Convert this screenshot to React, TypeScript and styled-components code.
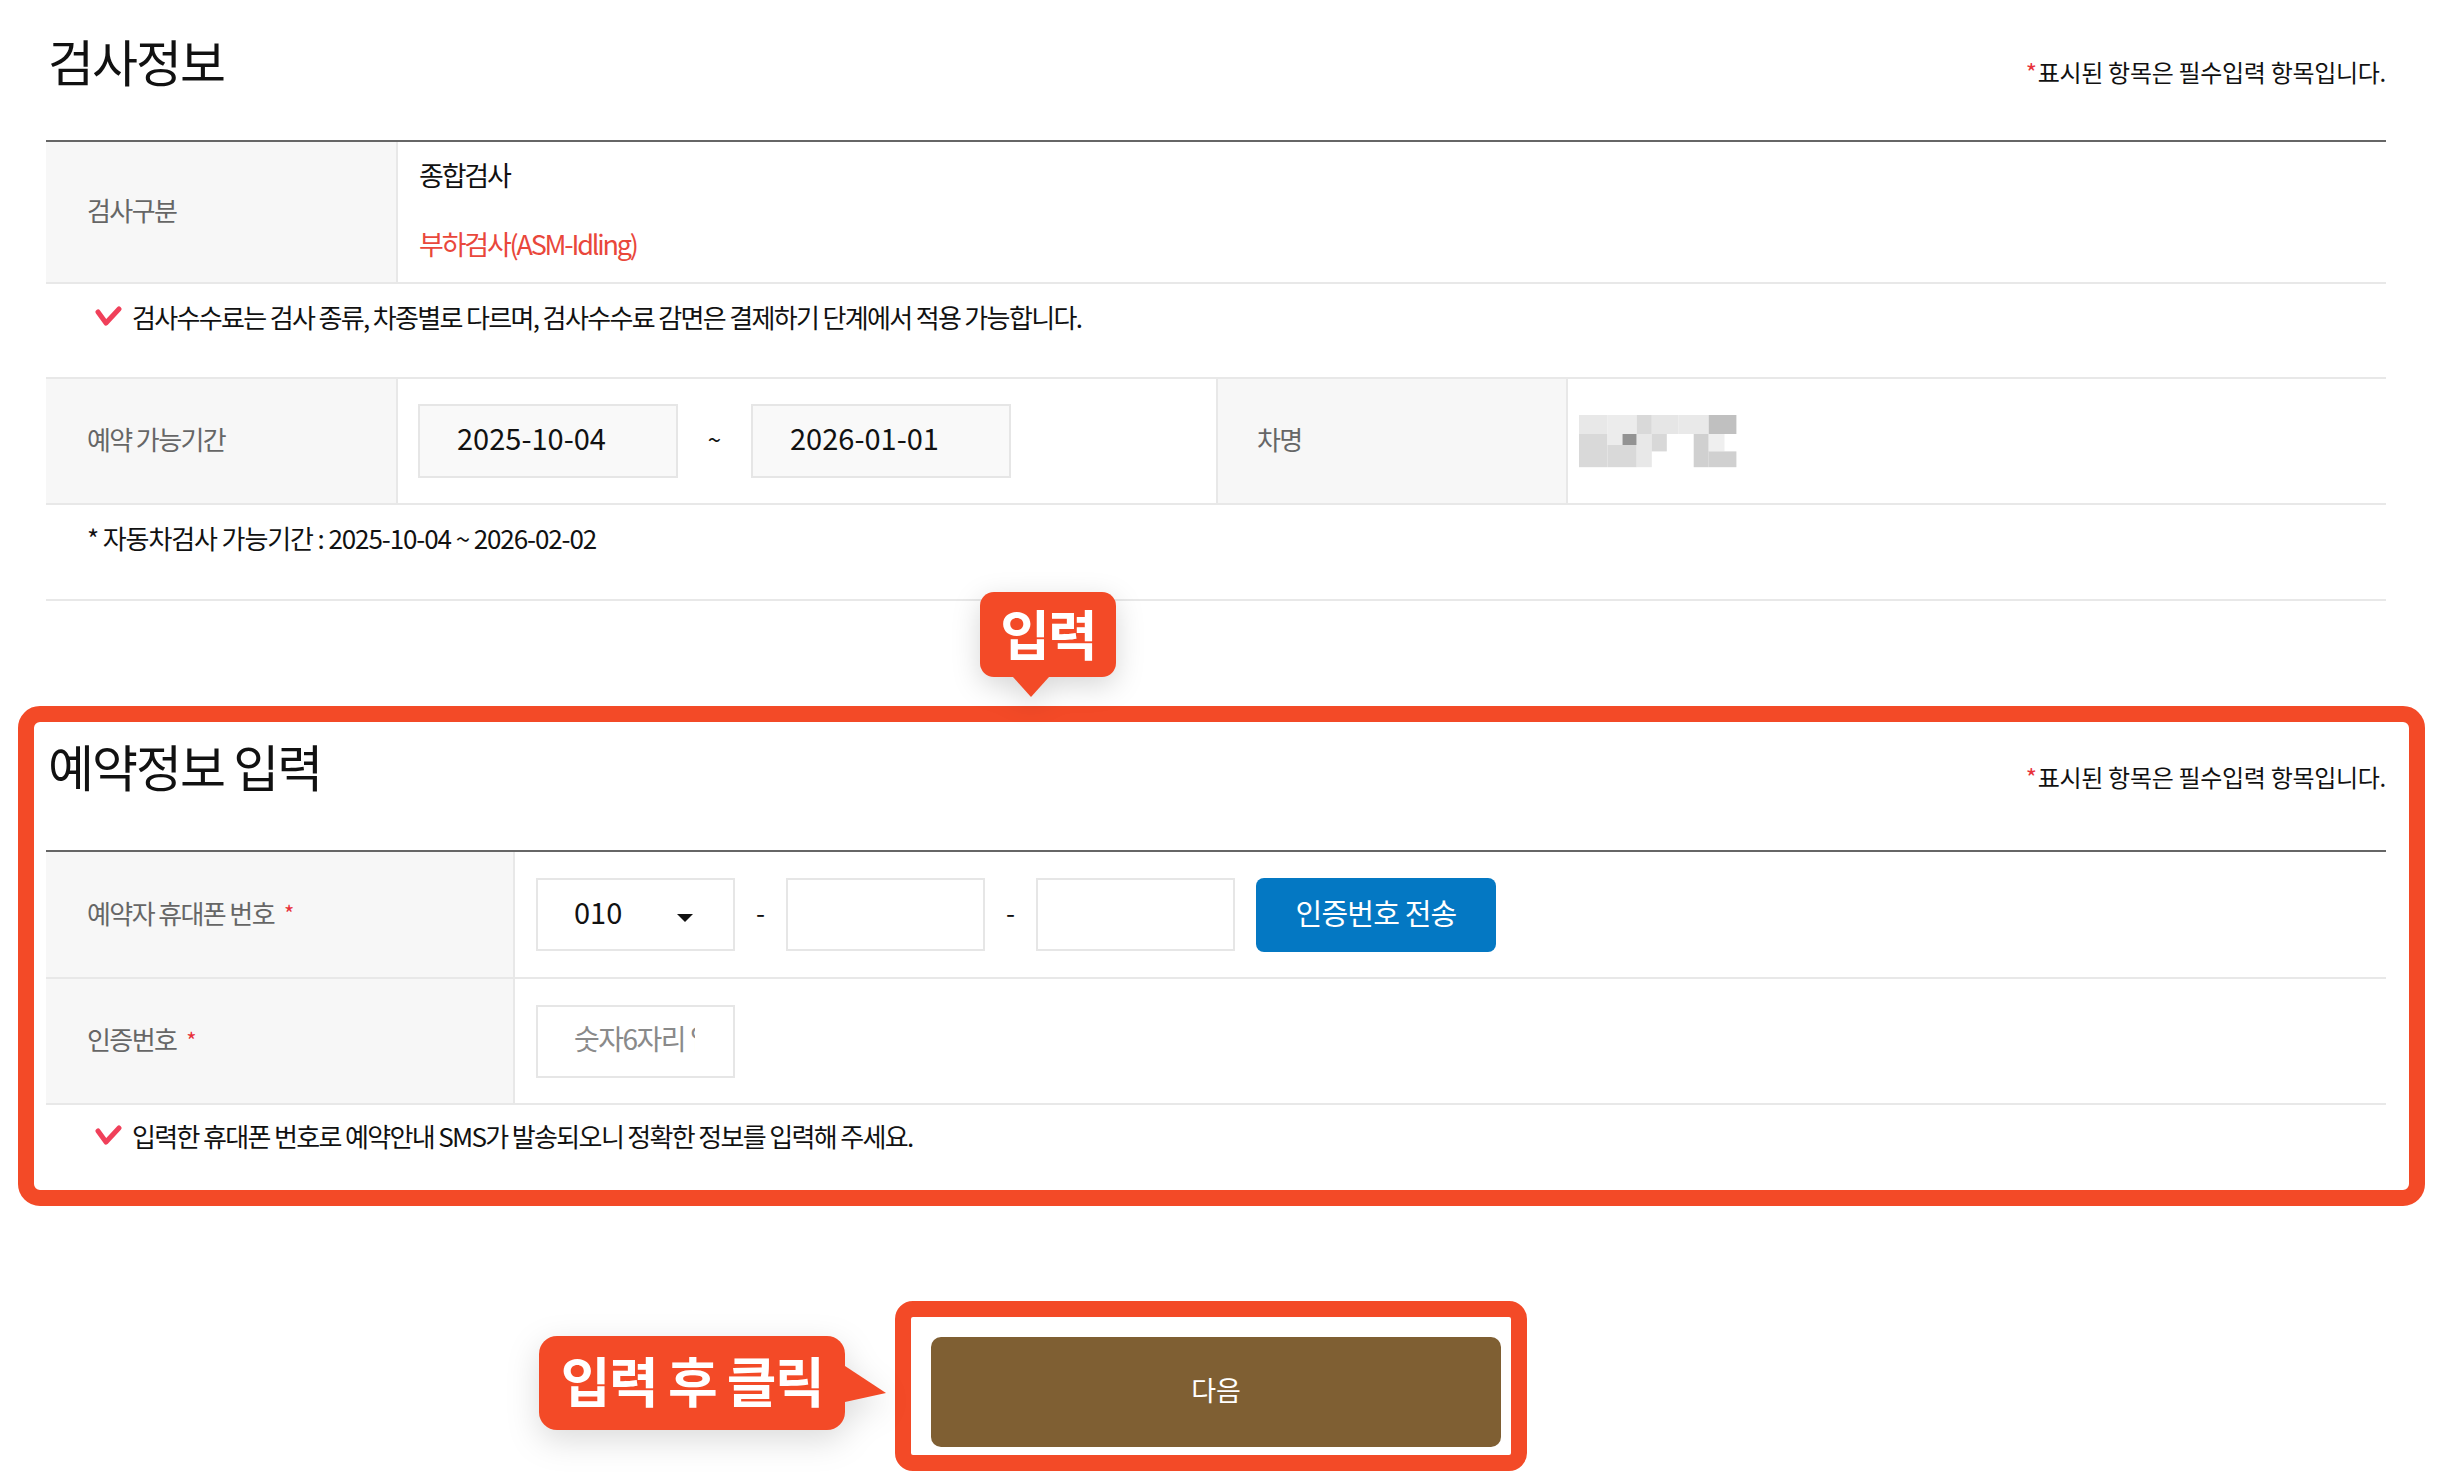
import styled, { createGlobalStyle } from "styled-components";

const ORANGE = "#f34a27";
const LINE = "#e8e8e8";

const GlobalStyle = createGlobalStyle`
  html, body { margin: 0; padding: 0; background: #fff; }
  body {
    font-family: "Noto Sans CJK KR", "Noto Sans", sans-serif;
    color: #111;
  }
  *, *::before, *::after { box-sizing: border-box; }
`;

const Page = styled.div`
  width: 2444px;
  height: 1484px;
  padding: 0 58px 0 46px;
  overflow: hidden;
`;

const SectionHead = styled.div<{ $height: number; $top: number }>`
  display: flex;
  justify-content: space-between;
  align-items: baseline;
  height: ${(p) => p.$height}px;
  padding-top: ${(p) => p.$top}px;
`;

const Title = styled.h2`
  margin: 0 0 0 2px;
  font-size: 50px;
  font-weight: 400;
  line-height: 60px;
  letter-spacing: -2px;
  color: #111;
`;

const Required = styled.p`
  margin: 0;
  font-size: 24px;
  line-height: 30px;
  letter-spacing: -0.3px;
  color: #111;
`;

const Star = styled.span`
  color: #e8313a;
  margin-right: 1px;
`;

const Table = styled.div<{ $cols: string }>`
  display: grid;
  grid-template-columns: ${(p) => p.$cols};
  border-top: 2px solid #666;
`;

const Label = styled.div<{ $h: number; $divider?: boolean }>`
  height: ${(p) => p.$h}px;
  display: flex;
  align-items: center;
  gap: 10px;
  padding: 0 0 5px ${(p) => (p.$divider ? 39 : 41)}px;
  background: #f7f7f7;
  border-bottom: 2px solid ${LINE};
  border-left: ${(p) => (p.$divider ? `2px solid ${LINE}` : "none")};
  font-size: 26px;
  letter-spacing: -1.6px;
  color: #666;
`;

const LabelStar = styled.span`
  color: #e8313a;
  font-size: 22px;
`;

const Cell = styled.div<{ $h: number; $span?: number; $pad?: number }>`
  grid-column: span ${(p) => p.$span ?? 1};
  height: ${(p) => p.$h}px;
  display: flex;
  align-items: center;
  padding-left: ${(p) => p.$pad ?? 21}px;
  border-left: 2px solid ${LINE};
  border-bottom: 2px solid ${LINE};
`;

const TypeCell = styled(Cell)`
  flex-direction: column;
  align-items: flex-start;
  justify-content: flex-start;
  gap: 37px;
  padding-top: 17px;
`;

const TypeText = styled.span<{ $accent?: boolean }>`
  font-size: 27px;
  line-height: 32px;
  letter-spacing: -2.2px;
  color: ${(p) => (p.$accent ? "#e9473b" : "#111")};
`;

const NoteRow = styled.div<{
  $h: number;
  $top: number;
  $pad: number;
  $border?: boolean;
  $spacing?: number;
}>`
  grid-column: 1 / -1;
  height: ${(p) => p.$h}px;
  display: flex;
  align-items: flex-start;
  gap: 10px;
  padding: ${(p) => p.$top}px 0 0 ${(p) => p.$pad}px;
  border-bottom: ${(p) => (p.$border ? `2px solid ${LINE}` : "none")};
  font-size: 26px;
  line-height: 32px;
  letter-spacing: ${(p) => p.$spacing ?? -1.65}px;
  color: #111;
`;

const CheckIcon = styled.svg`
  flex: none;
  width: 28px;
  height: 32px;
`;

const DateBox = styled.div`
  width: 260px;
  height: 74px;
  display: flex;
  align-items: center;
  padding: 0 0 9px 37px;
  background: #f9f9f9;
  border: 2px solid #e6e6e6;
  font-size: 29px;
  color: #111;
`;

const Tilde = styled.span`
  width: 73px;
  padding-bottom: 6px;
  text-align: center;
  font-size: 24px;
  color: #111;
`;

const Blob = styled.svg`
  width: 158px;
  height: 53px;
`;

const Highlight = styled.section`
  position: relative;
  margin: 105px -39px 0 -28px;
  padding: 0 23px 0 12px;
  border: 16px solid ${ORANGE};
  border-radius: 22px;
`;

const Bubble = styled.div`
  position: absolute;
  left: 946px;
  top: -130px;
  width: 136px;
  height: 85px;
  display: flex;
  align-items: center;
  justify-content: center;
  padding-bottom: 4px;
  background: ${ORANGE};
  border-radius: 14px;
  color: #fff;
  font-size: 54px;
  font-weight: 700;
  letter-spacing: -2px;
  filter: drop-shadow(0 8px 14px rgba(0, 0, 0, 0.16));

  &::after {
    content: "";
    position: absolute;
    left: 33px;
    top: 100%;
    width: 36px;
    height: 20px;
    background: ${ORANGE};
    clip-path: polygon(0 0, 100% 0, 50% 100%);
  }
`;

const FieldRow = styled.div`
  display: flex;
  align-items: center;
  gap: 21px;
`;

const Select = styled.div`
  width: 199px;
  height: 73px;
  display: flex;
  align-items: center;
  justify-content: space-between;
  padding: 0 40px 8px 36px;
  background: #fff;
  border: 2px solid #e6e6e6;
  font-size: 29px;
  color: #111;
`;

const Caret = styled.span`
  width: 0;
  height: 0;
  margin-top: 14px;
  border-left: 8px solid transparent;
  border-right: 8px solid transparent;
  border-top: 8px solid #111;
`;

const Dash = styled.span`
  width: 9px;
  padding-bottom: 6px;
  font-size: 26px;
  color: #111;
`;

const TextInput = styled.input`
  width: 199px;
  height: 73px;
  padding: 0 38px 6px 36px;
  background: #fff;
  border: 2px solid #e6e6e6;
  border-radius: 0;
  outline: none;
  font-family: inherit;
  font-size: 28px;
  letter-spacing: -1.5px;
  color: #111;

  &::placeholder {
    color: #8a8a8a;
  }
`;

const BlueButton = styled.button`
  width: 240px;
  height: 74px;
  padding: 0 0 5px;
  border: 0;
  border-radius: 8px;
  background: #0478c3;
  color: #fff;
  font-family: inherit;
  font-size: 29px;
  letter-spacing: -0.8px;
`;

const Footer = styled.div`
  display: flex;
  justify-content: center;
  margin-top: 95px;
`;

const NextFrame = styled.div`
  position: relative;
  margin-right: 10px;
  padding: 20px 10px 8px 20px;
  border: 16px solid ${ORANGE};
  border-radius: 18px;
`;

const NextButton = styled.button`
  display: block;
  width: 570px;
  height: 110px;
  padding: 0 0 6px;
  border: 0;
  border-radius: 10px;
  background: #7f5f33;
  color: #fff;
  font-family: inherit;
  font-size: 27px;
`;

const Callout = styled.div`
  position: absolute;
  left: -372px;
  top: 19px;
  width: 306px;
  height: 94px;
  display: flex;
  align-items: center;
  justify-content: center;
  padding-bottom: 7px;
  background: ${ORANGE};
  border-radius: 18px;
  color: #fff;
  font-size: 54px;
  font-weight: 700;
  letter-spacing: -1.5px;
  white-space: nowrap;
  filter: drop-shadow(0 10px 16px rgba(0, 0, 0, 0.14));

  &::after {
    content: "";
    position: absolute;
    left: 100%;
    top: 30px;
    width: 41px;
    height: 36px;
    background: ${ORANGE};
    clip-path: polygon(0 0, 100% 75%, 0 100%);
  }
`;

const Check = () => (
  <CheckIcon viewBox="0 0 28 32">
    <path
      d="M4 11 L12 22 L25 8"
      fill="none"
      stroke="#f0405a"
      strokeWidth="5"
      strokeLinecap="round"
      strokeLinejoin="round"
    />
  </CheckIcon>
);

// blurred car-name thumbnail: [x, y, w, h, colour]
const blobCells: [number, number, number, number, string][] = [
  [0, 0, 28.5, 19, "#e8e8e8"],
  [28.5, 0, 29.2, 19, "#ececec"],
  [57.7, 0, 15.1, 19, "#d9d9d9"],
  [72.8, 0, 26.8, 19, "#e6e6e6"],
  [99.6, 0, 30.1, 19, "#e9e9e9"],
  [129.7, 0, 27.7, 19, "#c0c0c0"],
  [0, 19, 28.5, 33.2, "#d9d9d9"],
  [28.5, 19, 15, 11, "#ececec"],
  [43.5, 19, 14.2, 11, "#939393"],
  [28.5, 30, 29.2, 22.2, "#d9d9d9"],
  [57.7, 19, 15.1, 33.2, "#e8e8e8"],
  [72.8, 19, 15, 17.4, "#d8d8d8"],
  [114.7, 19, 15, 33.2, "#d0d0d0"],
  [129.7, 19, 15.8, 17.4, "#efefef"],
  [129.7, 36.4, 27.7, 15.8, "#d0d0d0"],
];

export default function App() {
  return (
    <>
      <GlobalStyle />
      <Page>
        <SectionHead $height={140} $top={30}>
          <Title>검사정보</Title>
          <Required>
            <Star>*</Star>표시된 항목은 필수입력 항목입니다.
          </Required>
        </SectionHead>

        <Table $cols="350px 820px 350px 1fr">
          <Label $h={142}>검사구분</Label>
          <TypeCell $h={142} $span={3}>
            <TypeText>종합검사</TypeText>
            <TypeText $accent>부하검사(ASM-Idling)</TypeText>
          </TypeCell>

          <NoteRow $h={95} $top={17} $pad={48} $border>
            <Check />
            검사수수료는 검사 종류, 차종별로 다르며, 검사수수료 감면은 결제하기 단계에서 적용 가능합니다.
          </NoteRow>

          <Label $h={126}>예약 가능기간</Label>
          <Cell $h={126} $pad={20}>
            <DateBox>2025-10-04</DateBox>
            <Tilde>~</Tilde>
            <DateBox>2026-01-01</DateBox>
          </Cell>
          <Label $h={126} $divider>
            차명
          </Label>
          <Cell $h={126} $pad={11}>
            <Blob viewBox="0 0 158 53">
              {blobCells.map(([x, y, w, h, c], i) => (
                <rect key={i} x={x} y={y} width={w} height={h} fill={c} />
              ))}
            </Blob>
          </Cell>

          <NoteRow $h={96} $top={17} $pad={41} $border $spacing={-1.1}>
            * 자동차검사 가능기간 : 2025-10-04 ~ 2026-02-02
          </NoteRow>
        </Table>

        <Highlight>
          <Bubble>입력</Bubble>
          <SectionHead $height={128} $top={13}>
            <Title>예약정보 입력</Title>
            <Required>
              <Star>*</Star>표시된 항목은 필수입력 항목입니다.
            </Required>
          </SectionHead>

          <Table $cols="467px 1fr">
            <Label $h={127}>
              예약자 휴대폰 번호 <LabelStar>*</LabelStar>
            </Label>
            <Cell $h={127}>
              <FieldRow>
                <Select>
                  010
                  <Caret />
                </Select>
                <Dash>-</Dash>
                <TextInput />
                <Dash>-</Dash>
                <TextInput />
                <BlueButton>인증번호 전송</BlueButton>
              </FieldRow>
            </Cell>

            <Label $h={126}>
              인증번호 <LabelStar>*</LabelStar>
            </Label>
            <Cell $h={126}>
              <TextInput placeholder="숫자6자리 입력" />
            </Cell>

            <NoteRow $h={85} $top={15} $pad={48}>
              <Check />
              입력한 휴대폰 번호로 예약안내 SMS가 발송되오니 정확한 정보를 입력해 주세요.
            </NoteRow>
          </Table>
        </Highlight>

        <Footer>
          <NextFrame>
            <Callout>입력 후 클릭</Callout>
            <NextButton>다음</NextButton>
          </NextFrame>
        </Footer>
      </Page>
    </>
  );
}
